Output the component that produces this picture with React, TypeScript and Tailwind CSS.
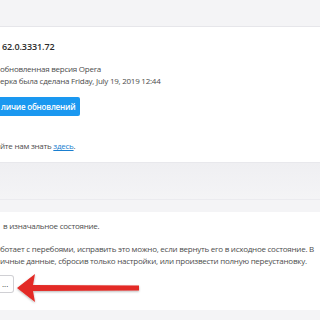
import React from 'react';

const font = { fontFamily: '"Open Sans", "Noto Sans", sans-serif' };

function Arrow() {
  return (
    <svg width="130" height="34" viewBox="0 0 130 34" className="absolute left-[14px] top-[271px]">
      <defs>
        <filter id="sh" x="-10%" y="-30%" width="120%" height="160%">
          <feDropShadow dx="0" dy="1" stdDeviation="1" floodColor="#000" floodOpacity="0.3" />
        </filter>
      </defs>
      <g filter="url(#sh)">
        <path d="M3 17 L21 3 L19 14 L125 14.5 L125 19.5 L19 20 L21 31 Z" fill="#e32b26" strokeLinejoin="round" />
      </g>
    </svg>
  );
}

export default function App() {
  return (
    <div className="relative w-[320px] h-[320px] overflow-hidden bg-[#f4f4f6] text-[#4d4d4d]" style={font}>
      {/* top toolbar area */}
      <div className="h-[27px] border-b border-[#e6e6ea]" />

      {/* about card */}
      <div className="h-[136px] bg-white pt-[11px] border-b border-[#e8e8ec]">
        <div className="pl-[2px] text-[9px] font-semibold tracking-[-0.1px] text-[#2b2b2b] leading-[18px]">62.0.3331.72</div>
        <div className="mt-[7px] text-[8px] tracking-[-0.25px] leading-[12px]">обновленная версия Opera</div>
        <div className="text-[8px] tracking-[-0.25px] leading-[12px]">ерка была сделана Friday, July 19, 2019 12:44</div>
        <button className="mt-[10px] h-[19px] w-[80px] whitespace-nowrap rounded-r-[2px] bg-[#1a98f0] text-left pl-[1px] text-[8px] font-semibold tracking-[-0.2px] text-white">
          личие обновлений
        </button>
        <div className="mt-[24px] text-[8px] tracking-[-0.25px] leading-[12px]">
          йте нам знать <span className="text-[#1a7fd0] underline">здесь</span>.
        </div>
      </div>

      {/* gap */}
      <div className="h-[37px] border-b border-[#ebebef] bg-gradient-to-b from-[#efeff2] to-[#f4f4f6]" />
      <div className="h-[12px]" />

      {/* reset card */}
      <div className="h-[98px] bg-white pt-[8px]">
        <div className="pl-[3px] text-[8px] tracking-[-0.25px] leading-[12px]">в изначальное состояние.</div>
        <div className="mt-[11px] whitespace-nowrap text-[8px] tracking-[-0.25px] leading-[12px]">
          ботает с перебоями, исправить это можно, если вернуть его в исходное состояние. В
        </div>
        <div className="whitespace-nowrap text-[8px] tracking-[-0.25px] leading-[12px]">
          ичные данные, сбросив только настройки, или произвести полную переустановку.
        </div>
        <div className="mt-[8px] flex h-[18px] w-[14px] items-center rounded-r-[3px] border border-l-0 border-[#d0d0d4] bg-white pl-[2px] text-[8px] text-[#333]">
          ...
        </div>
      </div>
      <Arrow />
    </div>
  );
}
